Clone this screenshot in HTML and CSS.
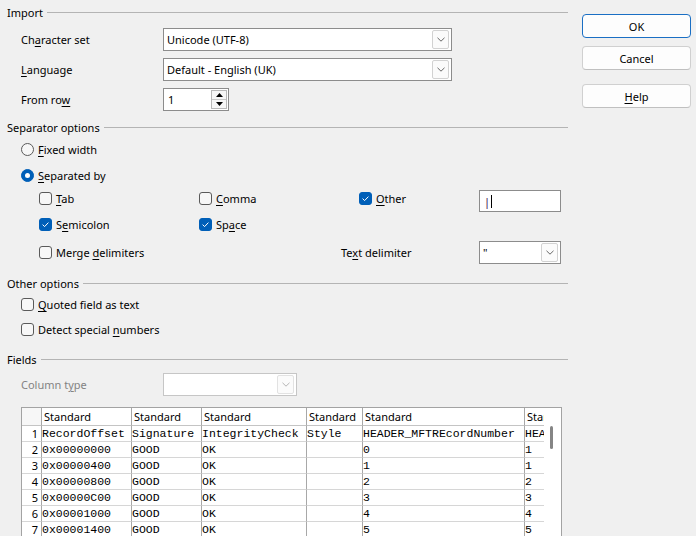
FILE: index.html
```html
<!DOCTYPE html>
<html lang="en">
<head>
<meta charset="utf-8">
<title>Text Import</title>
<link rel="stylesheet" href="styles.css">
</head>
<body>
<div class="dialog">
  <div class="main">
    <div class="sect"><span>Import</span></div>

    <div class="frow gap-first">
      <span class="lbl">Ch<u>a</u>racter set</span>
      <div class="combo combo-wide"><span class="ctext">Unicode (UTF-8)</span><span class="drop"><svg width="8" height="5" viewBox="0 0 8 5"><path d="M0.5 0.8 L4 4.2 L7.5 0.8" fill="none" stroke="#666" stroke-width="1"/></svg></span></div>
    </div>
    <div class="frow gap-7">
      <span class="lbl"><u>L</u>anguage</span>
      <div class="combo combo-wide"><span class="ctext">Default - English (UK)</span><span class="drop"><svg width="8" height="5" viewBox="0 0 8 5"><path d="M0.5 0.8 L4 4.2 L7.5 0.8" fill="none" stroke="#666" stroke-width="1"/></svg></span></div>
    </div>
    <div class="frow gap-7">
      <span class="lbl">From ro<u>w</u></span>
      <div class="spin"><span class="ctext">1</span>
        <span class="spinbtns">
          <span class="sb up"><svg width="7" height="4" viewBox="0 0 7 4"><path d="M0 4 L3.5 0 L7 4 Z" fill="#000"/></svg></span>
          <span class="sb down"><svg width="7" height="4" viewBox="0 0 7 4"><path d="M0 0 L3.5 4 L7 0 Z" fill="#000"/></svg></span>
        </span>
      </div>
    </div>

    <div class="sect sect-sep"><span>Separator options</span></div>
    <div class="opt-row radio-first">
      <span class="radio"></span><span class="otext"><u>F</u>ixed width</span>
    </div>
    <div class="opt-row radio-second">
      <span class="radio on"></span><span class="otext"><u>S</u>eparated by</span>
    </div>

    <div class="cb-row row-a">
      <div class="opt w160"><span class="cb"></span><span class="otext"><u>T</u>ab</span></div>
      <div class="opt w160"><span class="cb"></span><span class="otext"><u>C</u>omma</span></div>
      <div class="opt w120"><span class="cb on"><svg width="13" height="13" viewBox="0 0 13 13"><path d="M3.6 6.6 L5.6 8.6 L9.4 4.6" fill="none" stroke="#fff" stroke-width="1"/></svg></span><span class="otext"><u>O</u>ther</span></div>
      <div class="field other-field"><span class="ftext">|</span><span class="caret"></span></div>
    </div>
    <div class="cb-row row-b">
      <div class="opt w160"><span class="cb on"><svg width="13" height="13" viewBox="0 0 13 13"><path d="M3.6 6.6 L5.6 8.6 L9.4 4.6" fill="none" stroke="#fff" stroke-width="1"/></svg></span><span class="otext">S<u>e</u>micolon</span></div>
      <div class="opt w160"><span class="cb on"><svg width="13" height="13" viewBox="0 0 13 13"><path d="M3.6 6.6 L5.6 8.6 L9.4 4.6" fill="none" stroke="#fff" stroke-width="1"/></svg></span><span class="otext">Sp<u>a</u>ce</span></div>
    </div>
    <div class="cb-row row-c">
      <div class="opt w302"><span class="cb"></span><span class="otext">Merge <u>d</u>elimiters</span></div>
      <span class="td-lbl">Te<u>x</u>t delimiter</span>
      <div class="combo combo-small"><span class="ctext">"</span><span class="drop"><svg width="8" height="5" viewBox="0 0 8 5"><path d="M0.5 0.8 L4 4.2 L7.5 0.8" fill="none" stroke="#666" stroke-width="1"/></svg></span></div>
    </div>

    <div class="sect sect-other"><span>Other options</span></div>
    <div class="opt-row quoted">
      <span class="cb"></span><span class="otext"><u>Q</u>uoted field as text</span>
    </div>
    <div class="opt-row detect">
      <span class="cb"></span><span class="otext">Detect special <u>n</u>umbers</span>
    </div>

    <div class="sect sect-fields"><span>Fields</span></div>
    <div class="frow coltype">
      <span class="lbl disabled">Column t<u>y</u>pe</span>
      <div class="combo combo-disabled"><span class="ctext"></span><span class="drop"><svg width="8" height="5" viewBox="0 0 8 5"><path d="M0.5 0.8 L4 4.2 L7.5 0.8" fill="none" stroke="#b5b5b5" stroke-width="1"/></svg></span></div>
    </div>

    <div class="preview">
      <div class="grid-clip">
        <div class="grid">
          <div class="c corner hdr"></div>
          <div class="c hdr">Standard</div>
          <div class="c hdr">Standard</div>
          <div class="c hdr">Standard</div>
          <div class="c hdr">Standard</div>
          <div class="c hdr">Standard</div>
          <div class="c hdr">Standard</div>

          <div class="c rn">1</div>
          <div class="c m">RecordOffset</div>
          <div class="c m">Signature</div>
          <div class="c m">IntegrityCheck</div>
          <div class="c m">Style</div>
          <div class="c m">HEADER_MFTREcordNumber</div>
          <div class="c m">HEADER_MFTREcordNumber</div>

          <div class="c rn">2</div>
          <div class="c m">0x00000000</div>
          <div class="c m">GOOD</div>
          <div class="c m">OK</div>
          <div class="c m"></div>
          <div class="c m">0</div>
          <div class="c m">1</div>

          <div class="c rn">3</div>
          <div class="c m">0x00000400</div>
          <div class="c m">GOOD</div>
          <div class="c m">OK</div>
          <div class="c m"></div>
          <div class="c m">1</div>
          <div class="c m">1</div>

          <div class="c rn">4</div>
          <div class="c m">0x00000800</div>
          <div class="c m">GOOD</div>
          <div class="c m">OK</div>
          <div class="c m"></div>
          <div class="c m">2</div>
          <div class="c m">2</div>

          <div class="c rn">5</div>
          <div class="c m">0x00000C00</div>
          <div class="c m">GOOD</div>
          <div class="c m">OK</div>
          <div class="c m"></div>
          <div class="c m">3</div>
          <div class="c m">3</div>

          <div class="c rn">6</div>
          <div class="c m">0x00001000</div>
          <div class="c m">GOOD</div>
          <div class="c m">OK</div>
          <div class="c m"></div>
          <div class="c m">4</div>
          <div class="c m">4</div>

          <div class="c rn">7</div>
          <div class="c m">0x00001400</div>
          <div class="c m">GOOD</div>
          <div class="c m">OK</div>
          <div class="c m"></div>
          <div class="c m">5</div>
          <div class="c m">5</div>
        </div>
      </div>
      <div class="vscroll"><span class="thumb"></span></div>
    </div>
  </div>

  <div class="side">
    <div class="btn default">OK</div>
    <div class="btn cancel">Cancel</div>
    <div class="btn help"><span><u>H</u>elp</span></div>
  </div>
</div>
</body>
</html>
```
FILE: styles.css
```css
* { box-sizing: border-box; }
html, body { margin: 0; padding: 0; }
body {
  background: #f0f0f0;
  font-family: "Noto Sans", "Liberation Sans", sans-serif;
  font-size: 11px;
  color: #000;
  width: 696px;
  height: 536px;
  overflow: hidden;
}
u { text-decoration: underline; text-underline-offset: 2px; }

.dialog { display: flex; align-items: flex-start; }
.main {
  width: 568px;
  padding-left: 7px;
  padding-top: 4px;
  display: flex;
  flex-direction: column;
}
.side {
  margin-left: 14px;
  width: 109px;
  padding-top: 14px;
  display: flex;
  flex-direction: column;
}

/* buttons */
.btn {
  height: 24px;
  border: 1px solid #d0d0d0;
  border-bottom-color: #c0c0c0;
  border-radius: 4px;
  background: #fdfdfd;
  display: flex;
  align-items: center;
  justify-content: center;
}
.btn.default { border-color: #1a6fc4; }
.btn.cancel { margin-top: 8px; }
.btn.help { margin-top: 14px; }

/* section headers */
.sect { display: flex; align-items: center; height: 16px; }
.sect::after {
  content: "";
  flex: 1;
  height: 1px;
  background: #b4b4b4;
  margin-left: 4px;
}
.sect-sep { margin-top: 8px; }
.sect-other { margin-top: 11px; }
.sect-fields { margin-top: 14px; }

/* form rows */
.frow { display: flex; align-items: center; padding-left: 14px; height: 23px; }
.gap-first { margin-top: 8px; }
.gap-7 { margin-top: 7px; }
.lbl { width: 142px; }
.lbl.disabled { color: #838383; }

.combo {
  height: 23px;
  border: 1px solid #8c8c8c;
  background: #fff;
  display: flex;
  align-items: center;
  padding: 0 2px 0 3px;
}
.combo-wide { width: 289px; }
.combo-small { width: 82px; }
.combo-disabled { width: 134px; border-color: #c6c6c6; }
.ctext { flex: 1; white-space: nowrap; overflow: hidden; }
.drop {
  width: 17px;
  height: 19px;
  border: 1px solid #d2d2d2;
  border-radius: 2px;
  background: #fbfbfb;
  display: flex;
  align-items: center;
  justify-content: center;
}
.combo-disabled .drop { border-color: #e2e2e2; }

.spin {
  width: 66px;
  height: 23px;
  border: 1px solid #8c8c8c;
  background: #fff;
  display: flex;
  align-items: center;
  padding: 0 1px 0 4px;
}
.spinbtns {
  width: 16px;
  height: 19px;
  border: 1px solid #b8b8b8;
  background: #f7f7f7;
  display: flex;
  flex-direction: column;
}
.sb { flex: 1; display: flex; align-items: center; justify-content: center; }
.sb.up { border-bottom: 1px solid #c8c8c8; }

/* radio / checkbox rows */
.opt-row { display: flex; align-items: center; height: 16px; padding-left: 14px; }
.radio-first { margin-top: 6px; }
.radio-second { margin-top: 10px; }
.quoted { margin-top: 5px; }
.detect { margin-top: 9px; }

.radio {
  width: 13px;
  height: 13px;
  border-radius: 50%;
  border: 1px solid #5a5a5a;
  background: #f7f7f7;
  display: flex;
  align-items: center;
  justify-content: center;
  flex: none;
}
.radio.on { background: #005fb8; border-color: #005fb8; }
.radio.on::after {
  content: "";
  width: 5px;
  height: 5px;
  border-radius: 50%;
  background: #fff;
}
.cb {
  width: 13px;
  height: 13px;
  border-radius: 3px;
  border: 1px solid #5a5a5a;
  background: #f7f7f7;
  flex: none;
  display: flex;
}
.cb.on { background: #005fb8; border-color: #005fb8; }
.cb svg { margin: -1px; }
.otext { margin-left: 4px; white-space: nowrap; }

.cb-row { display: flex; align-items: center; padding-left: 32px; }
.row-a { height: 16px; margin-top: 7px; align-items: flex-start; }
.row-a .opt { height: 16px; }
.row-b { height: 16px; margin-top: 10px; }
.row-c { height: 23px; margin-top: 9px; }
.opt { display: flex; align-items: center; }
.w160 { width: 160px; }
.w120 { width: 120px; }
.w302 { width: 302px; }
.td-lbl { width: 138px; }

.field {
  width: 82px;
  height: 22px;
  border: 1px solid #8c8c8c;
  background: #fff;
  margin-top: 0;
  display: flex;
  align-items: center;
  padding-left: 4px;
}
.ftext { color: #3a0a4a; }
.caret { width: 1px; height: 13px; background: #000; margin-left: 1px; }

.coltype { margin-top: 6px; }

/* preview grid */
.preview {
  margin-top: 11px;
  margin-left: 14px;
  width: 541px;
  height: 140px;
  border: 1px solid #a3a3a3;
  background: #fff;
  display: flex;
}
.grid-clip { width: 522px; overflow: hidden; flex: none; }
.grid {
  display: grid;
  grid-template-columns: 20px 90px 70px 105px 56px 162px 80px;
  grid-template-rows: 18px repeat(7, 16px);
  width: max-content;
}
.c {
  border-right: 1px solid #a8a8a8;
  border-bottom: 1px solid #d6d6d6;
  white-space: nowrap;
  overflow: hidden;
  line-height: 15px;
  padding-left: 1px;
}
.hdr { padding-left: 2px; line-height: 17px; border-bottom-color: #c4c4c4; }
.corner { background: #f7f7f7; }
.rn { text-align: right; padding-right: 3px; }
.m {
  font-family: "Liberation Mono", "DejaVu Sans Mono", monospace;
  font-size: 11.5px;
  padding-left: 0;
}
.vscroll { flex: 1; position: relative; }
.thumb {
  position: absolute;
  left: 6px;
  top: 18px;
  width: 3px;
  height: 23px;
  border-radius: 2px;
  background: #858585;
}
```
